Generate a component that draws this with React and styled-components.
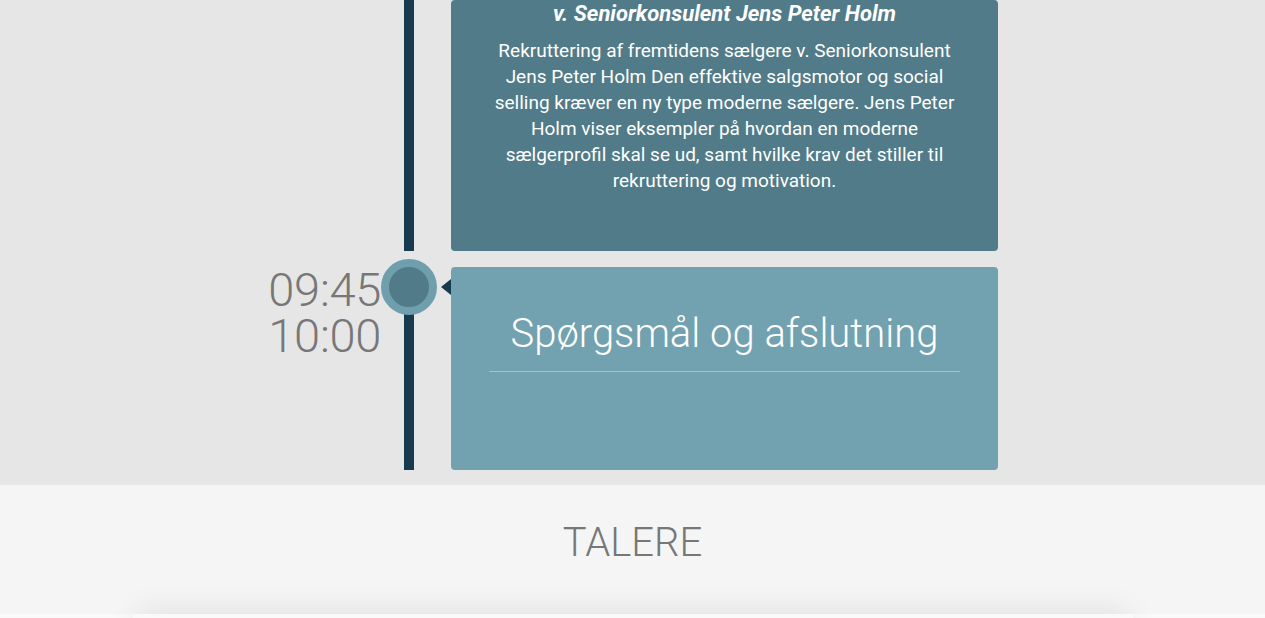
import React from "react";
import styled, { createGlobalStyle } from "styled-components";

const GlobalStyle = createGlobalStyle`
  html, body {
    margin: 0;
    padding: 0;
    background: #fafafa;
    font-family: Roboto, "Noto Sans", Arial, sans-serif;
  }
  * { box-sizing: border-box; }
`;

const events = [
  {
    time: null,
    tone: "dark",
    subtitle: "v. Seniorkonsulent Jens Peter Holm",
    text:
      "Rekruttering af fremtidens sælgere v. Seniorkonsulent Jens Peter Holm Den effektive salgsmotor og social selling kræver en ny type moderne sælgere. Jens Peter Holm viser eksempler på hvordan en moderne sælgerprofil skal se ud, samt hvilke krav det stiller til rekruttering og motivation.",
  },
  {
    time: ["09:45", "10:00"],
    tone: "light",
    title: "Spørgsmål og afslutning",
  },
];

export default function App() {
  return (
    <>
      <GlobalStyle />
      <Program>
        {events.map((ev, i) => (
          <Row key={i} last={i === events.length - 1}>
            <Time>
              {ev.time && ev.time.map((t) => <div key={t}>{t}</div>)}
            </Time>
            <Marker>
              {ev.time && (
                <>
                  <Dot />
                  <Arrow />
                </>
              )}
            </Marker>
            <Card tone={ev.tone}>
              {ev.subtitle && <Subtitle>{ev.subtitle}</Subtitle>}
              {ev.text && <Body>{ev.text}</Body>}
              {ev.title && <Title>{ev.title}</Title>}
            </Card>
          </Row>
        ))}
      </Program>
      <Speakers>
        <SectionTitle>TALERE</SectionTitle>
      </Speakers>
      <SpeakerArea>
        <SpeakerBox />
      </SpeakerArea>
    </>
  );
}

const Program = styled.section`
  background: #e6e6e6;
  padding-bottom: 15px;
`;

const Row = styled.div`
  display: grid;
  grid-template-columns: 381px 70px 547px;
  padding-bottom: ${(p) => (p.last ? "0" : "16px")};
`;

const Time = styled.div`
  text-align: right;
  font-size: 47px;
  line-height: 46px;
  font-weight: 300;
  color: #777777;
  letter-spacing: -0.3px;
`;

const Marker = styled.div`
  position: relative;
  background: linear-gradient(
    to right,
    transparent 23px,
    #173a4e 23px,
    #173a4e 33px,
    transparent 33px
  );
`;

const Dot = styled.div`
  position: absolute;
  left: 0;
  top: -8px;
  width: 56px;
  height: 56px;
  border-radius: 50%;
  background: #517b88;
  border: 8px solid #6f9fad;
`;

const Arrow = styled.div`
  position: absolute;
  right: 0;
  top: 12px;
  width: 0;
  height: 0;
  border-top: 8px solid transparent;
  border-bottom: 8px solid transparent;
  border-right: 10px solid #173a4e;
`;

const Card = styled.div`
  border-radius: 4px;
  color: #ffffff;
  text-align: center;
  background: ${(p) => (p.tone === "dark" ? "#517b88" : "#72a2b0")};
  padding: 0 38px;
  padding-bottom: ${(p) => (p.tone === "dark" ? "57px" : "98px")};
`;

const Subtitle = styled.div`
  font-size: 22px;
  line-height: 28px;
  font-weight: 700;
  font-style: italic;
`;

const Body = styled.p`
  margin: 10px 0 0;
  font-size: 19px;
  line-height: 26px;
  font-weight: 400;
`;

const Title = styled.h3`
  margin: 0;
  padding: 44px 0 14px;
  font-size: 40px;
  line-height: 46px;
  font-weight: 300;
  border-bottom: 1px solid rgba(255, 255, 255, 0.35);
`;

const Speakers = styled.section`
  background: #f5f5f5;
  padding: 34px 0 47px;
`;

const SectionTitle = styled.h2`
  margin: 0;
  text-align: center;
  font-size: 40px;
  line-height: 48px;
  font-weight: 300;
  color: #777777;
`;

const SpeakerArea = styled.section`
  background: #fafafa;
`;

const SpeakerBox = styled.div`
  width: 1000px;
  margin: 0 auto;
  height: 300px;
  background: #fafafa;
  box-shadow: 0 -6px 30px -4px rgba(0, 0, 0, 0.09);
`;
